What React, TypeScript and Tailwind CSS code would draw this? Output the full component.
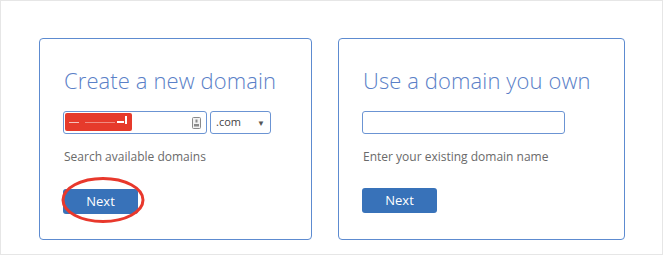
import React from "react";

function AutofillIcon() {
  return (
    <svg width="9" height="12" viewBox="0 0 9 12" className="shrink-0">
      <rect x="0.5" y="0.5" width="8" height="11" rx="1" fill="#f2f2f2" stroke="#8a8a8a" />
      <rect x="3.5" y="2.5" width="2" height="3" fill="#8a8a8a" />
      <rect x="2" y="7" width="5" height="2.5" fill="#8a8a8a" />
    </svg>
  );
}

export default function App() {
  return (
    <div className="w-[663px] h-[256px] bg-white" style={{ fontFamily: '"Open Sans", "Noto Sans", sans-serif' }}>
      <div className="h-[255px] border border-[#e6e6e6] flex items-start pl-[38px] pt-[37px] gap-[26px]">
        {/* Create domain card */}
        <div className="w-[273px] h-[202px] border border-[#5d8bd0] rounded-[4px] pl-[23px] pt-[21px]">
          <h2 className="ml-[1px] text-[22px] font-light text-[#5a80c7] leading-[40px] tracking-[0.1px]">Create a new domain</h2>
          <div className="flex gap-[3px] mt-[11px]">
            <div className="relative w-[144px] h-[23px] border border-[#6b94d3] rounded-[3px] flex items-center justify-end pr-[5px]">
              <div className="absolute left-[1px] top-[1px] w-[67px] h-[18px] bg-[#e63a2b] rounded-[2px]">
                <div className="absolute left-[4px] top-[9px] w-[10px] h-[1px] bg-[#f5c1bb]" />
                <div className="absolute left-[20px] top-[9px] w-[30px] h-[1px] bg-[#f08a80]" />
                <div className="absolute left-[52px] top-[8px] w-[7px] h-[2px] bg-white" />
                <div className="absolute left-[60px] top-[3px] w-[2px] h-[8px] bg-white" />
              </div>
              <AutofillIcon />
            </div>
            <div className="w-[61px] h-[23px] border border-[#6b94d3] rounded-[3px] flex items-center justify-between pl-[5px] pr-[5px] text-[11px] text-[#444]">
              <span>.com</span>
              <span className="text-[8px] text-[#555]">▼</span>
            </div>
          </div>
          <p className="ml-[1px] mt-[14px] text-[12px] text-[#6a6a6a] leading-[18px]">Search available domains</p>
          <div className="relative mt-[22px] w-[75px]">
            <button className="w-[75px] h-[25px] bg-[#3872b9] text-white text-[13px] rounded-[3px] leading-none">Next</button>
            <svg className="absolute left-[-2px] top-[-12px]" width="86" height="48" viewBox="0 0 86 48">
              <ellipse cx="42" cy="24" rx="40" ry="21.5" fill="none" stroke="#e8382c" strokeWidth="3" />
            </svg>
          </div>
        </div>

        {/* Own domain card */}
        <div className="w-[287px] h-[202px] border border-[#5d8bd0] rounded-[4px] pl-[23px] pt-[21px]">
          <h2 className="ml-[1px] text-[22px] font-light text-[#5a80c7] leading-[40px] tracking-[0.1px]">Use a domain you own</h2>
          <div className="mt-[11px] w-[203px] h-[23px] border border-[#6b94d3] rounded-[3px]" />
          <p className="ml-[1px] mt-[14px] text-[12px] text-[#6a6a6a] leading-[18px]">Enter your existing domain name</p>
          <button className="mt-[22px] w-[75px] h-[25px] bg-[#3872b9] text-white text-[13px] rounded-[3px] leading-none">Next</button>
        </div>
      </div>
    </div>
  );
}
